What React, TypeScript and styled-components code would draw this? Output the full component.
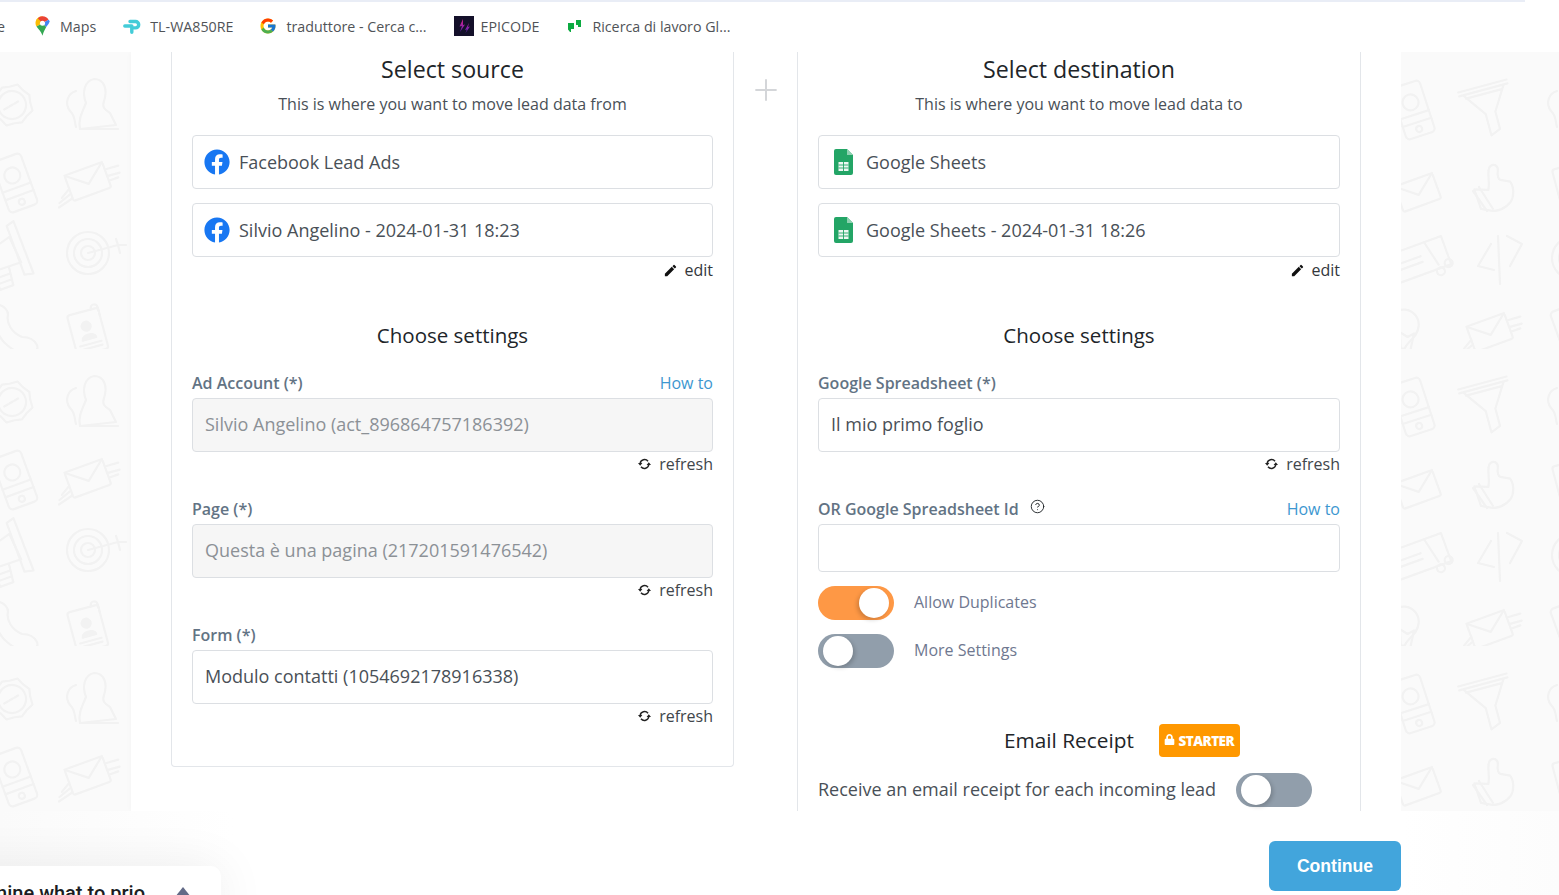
import React from "react";
import styled, { createGlobalStyle } from "styled-components";
import { FaFacebook, FaLock } from "react-icons/fa";
import { FcGoogle } from "react-icons/fc";
import { MdEdit } from "react-icons/md";
import { Plus, CircleHelp } from "lucide-react";

const Global = createGlobalStyle`
  html, body { margin: 0; padding: 0; background: #fff; }
  body { font-family: "Open Sans", "Liberation Sans", sans-serif; color: #495057; }
  * { box-sizing: border-box; }
`;

const Page = styled.div`
  position: relative;
  width: 1559px;
  height: 895px;
  overflow: hidden;
  display: flex;
  flex-direction: column;
`;

/* Bookmarks */
const BookmarksBar = styled.header`
  height: 52px;
  flex: none;
  background: #fff;
  display: flex;
  flex-direction: column;
`;
const TopRule = styled.div`
  height: 2px;
  margin-right: 34px;
  background: #e9edf6;
  flex: none;
`;
const BookmarkList = styled.nav`
  display: flex;
  align-items: center;
  gap: 27px;
  height: 48px;
  margin-left: -3px;
`;
const Bookmark = styled.span<{ $gap?: number }>`
  display: inline-flex;
  align-items: center;
  gap: ${(p) => p.$gap ?? 10}px;
  font-size: 14.25px;
  color: #505357;
  white-space: nowrap;
`;
const CutBookmark = styled(Bookmark)`
  margin-right: 3px;
`;
const GoogleMark = styled(FcGoogle)`
  margin-left: -1px;
`;

/* Main */
const Middle = styled.main`
  flex: none;
  height: 759px;
  display: flex;
  overflow: hidden;
`;
const Side = styled.aside<{ $w: number }>`
  flex: none;
  width: ${(p) => p.$w}px;
  background: #fafafa;
  overflow: hidden;
  line-height: 0;
`;
const Center = styled.div`
  flex: none;
  width: 1270px;
  background: #fff;
  padding: 0 40px;
  display: flex;
  align-items: flex-start;
  box-shadow: 0 0 6px rgba(0, 0, 0, 0.03);
`;
const Card = styled.section<{ $w: number }>`
  flex: none;
  width: ${(p) => p.$w}px;
  border: 1px solid #e3e6ea;
  border-top: none;
  border-radius: 0 0 4px 4px;
  padding: 0 20px 38px;
`;
const PlusCol = styled.div`
  flex: none;
  width: 63px;
  display: flex;
  justify-content: center;
  padding-top: 21px;
  color: #d4d6d9;
`;
const Title = styled.h2`
  margin: 0;
  height: 36px;
  line-height: 34px;
  font-size: 23.2px;
  font-weight: 500;
  color: #212529;
  text-align: center;
`;
const Subtitle = styled.p`
  margin: 4px 0 19px;
  height: 24px;
  line-height: 24px;
  font-size: 16px;
  color: #495057;
  text-align: center;
`;
const Selected = styled.div<{ $pad: number; $gap: number }>`
  height: 54px;
  border: 1px solid #dcdfe3;
  border-radius: 4px;
  display: flex;
  align-items: center;
  gap: ${(p) => p.$gap}px;
  padding-left: ${(p) => p.$pad}px;
  font-size: 18px;
  color: #495057;
  & + & { margin-top: 14px; }
`;
const ActionRow = styled.div`
  height: 24px;
  display: flex;
  justify-content: flex-end;
  align-items: center;
  gap: 8px;
  font-size: 16px;
  color: #41464b;
`;
const EditRow = styled(ActionRow)`
  margin-top: 1px;
  gap: 6px;
  color: #33373b;
`;
const SectionTitle = styled.h3`
  margin: 40px 0 22px;
  height: 28px;
  line-height: 26px;
  font-size: 20.5px;
  font-weight: 500;
  color: #212529;
  text-align: center;
`;
const Field = styled.div`
  margin-bottom: 22px;
  &:last-child { margin-bottom: 0; }
`;
const LabelRow = styled.div`
  height: 22px;
  margin-bottom: 4px;
  display: flex;
  align-items: center;
  justify-content: space-between;
`;
const Label = styled.label`
  font-size: 16px;
  font-weight: 600;
  color: #627384;
  display: inline-flex;
  align-items: center;
  gap: 11px;
  svg { color: #212529; margin-top: -6px; }
`;
const HowTo = styled.a`
  font-size: 16px;
  color: #3d97d0;
`;
const Input = styled.div<{ $disabled?: boolean; $h?: number }>`
  height: ${(p) => p.$h ?? 54}px;
  border: 1px solid #dcdfe3;
  border-radius: 4px;
  background: ${(p) => (p.$disabled ? "#f6f6f6" : "#fff")};
  color: ${(p) => (p.$disabled ? "#8c9196" : "#495057")};
  font-size: 18px;
  display: flex;
  align-items: center;
  padding: 0 0 2px 12px;
`;
const ToggleRow = styled.div`
  display: flex;
  align-items: center;
  gap: 20px;
  height: 34px;
  margin-top: 14px;
  font-size: 16px;
  color: #6f7890;
`;
const RowText = styled.span`
  margin-bottom: 2px;
`;
const Toggle = styled.span<{ $on?: boolean }>`
  flex: none;
  width: 76px;
  height: 34px;
  border-radius: 17px;
  padding: 2px 5px;
  display: flex;
  justify-content: ${(p) => (p.$on ? "flex-end" : "flex-start")};
  background: ${(p) => (p.$on ? "#fe9845" : "#919eab")};
  &::after {
    content: "";
    width: 30px;
    height: 30px;
    border-radius: 50%;
    background: #fff;
    box-shadow: ${(p) => (p.$on ? "-2px 2px 4px" : "2px 2px 4px")} rgba(0, 0, 0, 0.18);
  }
`;
const EmailHeader = styled.div`
  margin-top: 56px;
  height: 33px;
  padding-left: 186px;
  display: flex;
  align-items: center;
  gap: 25px;
  font-size: 20.8px;
  font-weight: 500;
  color: #212529;
`;
const EmailTitle = styled.span`
  margin-bottom: 2px;
`;
const Badge = styled.span`
  width: 81px;
  height: 33px;
  border-radius: 4px;
  background: #ff9800;
  color: #fff;
  display: inline-flex;
  align-items: center;
  justify-content: center;
  gap: 3px;
  font-size: 13.5px;
  font-weight: 800;
  letter-spacing: -0.5px;
  svg { margin-top: -3px; }
`;
const ReceiptRow = styled.div`
  margin-top: 16px;
  height: 34px;
  display: flex;
  align-items: center;
  gap: 20px;
  font-size: 18px;
  color: #495057;
`;

/* Footer */
const Footer = styled.footer`
  flex: none;
  height: 84px;
  background: linear-gradient(90deg, #fafafa, #ffffff 15%, #ffffff 90%, #fcfcfc);
  display: flex;
  justify-content: flex-end;
  align-items: flex-start;
  padding: 30px 158px 0 0;
`;
const ContinueButton = styled.button`
  width: 132px;
  height: 50px;
  border: none;
  border-radius: 6px;
  background: #42a5dc;
  color: #fff;
  font-family: "Liberation Sans", Arial, sans-serif;
  font-size: 17.6px;
  font-weight: 700;
`;
const Widget = styled.div`
  position: absolute;
  left: -80px;
  top: 866px;
  width: 301px;
  height: 60px;
  background: #fff;
  border-radius: 10px;
  box-shadow: 0 0 50px rgba(0, 0, 0, 0.07);
  display: flex;
  align-items: flex-start;
  padding: 15px 0 0 0;
`;
const WidgetText = styled.span`
  font-family: Roboto, "Liberation Sans", sans-serif;
  font-size: 20px;
  font-weight: 500;
  line-height: 24px;
  color: #1b1d23;
  white-space: nowrap;
  width: 225px;
  text-align: right;
`;
const WidgetCaret = styled.span`
  margin: 6px 0 0 30px;
  width: 0;
  height: 0;
  border-left: 8px solid transparent;
  border-right: 8px solid transparent;
  border-bottom: 10px solid #636b87;
`;

/* Bookmark icons */
const MapsIcon = () => (
  <svg width="15" height="20" viewBox="0 0 16 21">
    <path d="M8 0C3.600 0 .5 3.300.5 7.500c0 1.400.5 2.600 1.100 3.600L8 7.500V0z" fill="#fbbc04" />
    <path d="M3 2.200 8 7.500l6.400-3.800C13.300 1.500 10.900 0 8 0 6 0 4.300.8 3 2.200z" fill="#ea4335" />
    <path d="M14.400 3.700 8 7.500l4 4c1.800-2.200 3.500-4.300 3.500-6 0-.7-.5-1.300-1.100-1.800z" fill="#4285f4" />
    <path d="M1.600 11.100C3 13.500 6.700 16 8 21c1-4.500 2.800-6.900 4-9.500L8 7.500z" fill="#34a853" />
    <circle cx="8" cy="7.500" r="2.700" fill="#fff" />
  </svg>
);
const TpIcon = () => (
  <svg width="18" height="16" viewBox="0 0 18 16" fill="none">
    <path d="M7 3.500h5.500a3.200 3.200 0 0 1 0 6.400h-2" stroke="#43ccd8" strokeWidth="3.400" strokeLinecap="round" />
    <path d="M8.800 8v6.300M1.800 8h7" stroke="#43ccd8" strokeWidth="3.400" strokeLinecap="round" />
  </svg>
);
const EpicodeIcon = () => (
  <svg width="20" height="20" viewBox="0 0 20 20">
    <defs>
      <linearGradient id="epi" x1="0" y1="0" x2="0" y2="1">
        <stop offset="0" stopColor="#d91f86" />
        <stop offset="1" stopColor="#5b25c0" />
      </linearGradient>
    </defs>
    <rect width="20" height="20" fill="#14102a" />
    <path d="M9 3 5.500 10.500 8 10 6 16 11 8.500 9 9zM15 7 11 14l2-.5-1.500 3.500 4.500-6.500-2 .5z" fill="url(#epi)" />
  </svg>
);
const JobIcon = () => (
  <svg width="16" height="12" viewBox="0 0 16 12">
    <path d="M2 3h6v6H5v3H4L2 9.500z" fill="#0caa41" />
    <path d="M10 0h5v7h-3V5h-2z" fill="#0caa41" />
  </svg>
);
const SheetsIcon = () => (
  <svg width="19" height="26" viewBox="0 0 19 26">
    <path d="M2 0h11l6 6v18a2 2 0 0 1-2 2H2a2 2 0 0 1-2-2V2a2 2 0 0 1 2-2z" fill="#23a566" />
    <path d="M13 0l6 6h-6z" fill="#8ed1b1" />
    <path d="M4.500 13h10v9h-10z" fill="#eef7f2" />
    <path d="M4.500 16h10M4.500 19h10M9.500 13v9" stroke="#23a566" strokeWidth=".9" />
  </svg>
);
const FbIcon = () => <FaFacebook size={26} color="#1877f2" />;
const RefreshIcon = () => (
  <svg width="13" height="12" viewBox="0 0 13 12" fill="none">
    <path d="M2.200 5.500A4.400 4.400 0 0 1 10 3.200M10.800 6.500A4.400 4.400 0 0 1 3 8.800" stroke="#222" strokeWidth="1.500" />
    <path d="M0 5h4.400L2.200 7.800zM8.600 7h4.400L10.800 4.200z" fill="#222" />
  </svg>
);

/* Background doodles */
const Doodle = styled.g`
  fill: none;
  stroke: #f2f2f2;
  stroke-width: 2.2;
  stroke-linejoin: round;
  stroke-linecap: round;
`;
const At: React.FC<{ x: number; y: number; r?: number; children: React.ReactNode }> = ({ x, y, r = -20, children }) => (
  <g transform={`translate(${x} ${y}) rotate(${r})`}>{children}</g>
);
const Sale = () => (
  <>
    <path d="M0-20 7-17 15-15 17-7 20 0 17 7 15 15 7 17 0 20-7 17-15 15-17 7-20 0-17-7-15-15-7-17Z" />
    <circle r="14" />
    <path d="M-9 0h18" strokeDasharray="4 2" />
  </>
);
const People = () => (
  <>
    <path d="M-10 24C-12 14-8 8-4-2c-4-10-2-22 8-24 10 0 14 10 10 22-2 6 0 8 6 12l6 12z" />
    <path d="M-14 22c-2-6 0-10-6-16-6-8-2-18 6-20" />
    <path d="M-10 24h38" />
  </>
);
const Mobile = () => (
  <>
    <rect x="-15" y="-27" width="30" height="54" rx="4" />
    <circle cy="-8" r="8" />
    <path d="M-15 5h30M-15 13h30" />
    <circle cy="20" r="3" />
  </>
);
const Mail = () => (
  <>
    <rect x="-20" y="-14" width="40" height="27" rx="2" />
    <path d="M-20-14 0 2 20-14" />
  </>
);
const WingMail = () => (
  <>
    <Mail />
    <path d="M20-6 34-5M20 1 33 2M20 6l10 0M-20 0l-10 6M-20 5l-14 5M-20 10l-16 4" />
  </>
);
const Megaphone = () => (
  <>
    <path d="M-26-8-26 10 8 14V-14Z" transform="rotate(-5)" />
    <path d="M8-26 16-28 17 28 8 26Z" />
    <path d="M-20 12l0 20 14 0 2-18M-20 20h15M-18 26h12" />
  </>
);
const Target = () => (
  <>
    <circle r="21" />
    <circle r="14" />
    <circle r="7" />
    <path d="M0 0 30-8M28-14l2 6 8 0M30-8l2 8" />
  </>
);
const Call = () => (
  <path d="M-15-28c5 2 8 6 8 10-2 8 4 18 14 22 6 0 12 2 15 8 2 6-4 10-10 9-14-1-27-13-30-24" />
);
const IdCard = () => (
  <>
    <rect x="-16" y="-22" width="32" height="42" rx="3" />
    <circle cy="-7" r="4.500" fill="#f2f2f2" />
    <path d="M-7 6c0-6 14-6 14 0z" fill="#f2f2f2" />
    <path d="M-11 11h22M-11 15h22M9-22c0-6 7-5 7 0v8" />
  </>
);
const Funnel = () => (
  <path d="M-26-22H24M-26-18H24M-22-18-5 6-5 28 5 24 5 6 20-18M-20-14H16" />
);
const Thumb = () => (
  <>
    <path d="M-20 6-6 4C-6-6-12-16-8-20c4-4 8 0 8 4 0 4 2 8 4 8l10 0c6 6 6 16 4 20-4 8-12 12-18 12l-10 0z" transform="rotate(10)" />
    <path d="M-22 4-8 24M-16 0-2 22" />
  </>
);
const Code = () => (
  <path d="M-7-14-20 8-4 12M0-22 2 26M9-22 24-14 12 8" />
);
const Cheque = () => (
  <>
    <rect x="-32" y="-16" width="58" height="30" />
    <path d="M-26-4h26M-26 2h26M8-16 14 10" />
    <circle cx="14" cy="17" r="4" />
    <circle cx="24" cy="12" r="4" />
  </>
);
const Bulb = () => (
  <>
    <path d="M-8 16c0-8-12-12-12-24a15 15 0 0 1 30 0c0 12-10 16-12 24z" />
    <path d="M-8 20H8M-6 25H6M-6 16l-2-16 8 4 6-4-2 16" />
  </>
);

const LeftPattern = () => (
  <svg width="131" height="759">
    <defs>
      <pattern id="left-tile" width="297" height="297" patternUnits="userSpaceOnUse">
        <Doodle>
          <At x={12} y={53} r={-30}><Sale /></At>
          <At x={90} y={53} r={0}><People /></At>
          <At x={15} y={131}><Mobile /></At>
          <At x={88} y={130}><WingMail /></At>
          <At x={8} y={201}><Megaphone /></At>
          <At x={88} y={201} r={0}><Target /></At>
          <At x={15} y={281} r={0}><Call /></At>
          <At x={88} y={281} r={-15}><IdCard /></At>
        </Doodle>
      </pattern>
    </defs>
    <rect width="131" height="759" fill="url(#left-tile)" />
  </svg>
);
const RightPattern = () => (
  <svg width="158" height="759">
    <defs>
      <pattern id="right-tile" width="297" height="297" patternUnits="userSpaceOnUse">
        <Doodle>
          <At x={12} y={58} r={-18}><Mobile /></At>
          <At x={88} y={55} r={-15}><Funnel /></At>
          <At x={17} y={141}><Mail /></At>
          <At x={94} y={135} r={0}><Thumb /></At>
          <At x={21} y={208}><Cheque /></At>
          <At x={97} y={206} r={0}><Code /></At>
          <At x={7} y={281} r={5}><Bulb /></At>
          <At x={89} y={281}><WingMail /></At>
          <At x={170} y={53} r={0}><People /></At>
          <At x={172} y={135} r={-15}><IdCard /></At>
          <At x={172} y={206} r={0}><Target /></At>
          <At x={172} y={281}><Mobile /></At>
        </Doodle>
      </pattern>
    </defs>
    <rect width="158" height="759" fill="url(#right-tile)" />
  </svg>
);

const Refresh = () => (
  <ActionRow>
    <RefreshIcon />
    <span>refresh</span>
  </ActionRow>
);
const Edit = () => (
  <EditRow>
    <MdEdit size={15} color="#111" />
    <span>edit</span>
  </EditRow>
);

export default function App() {
  return (
    <Page>
      <Global />
      <BookmarksBar>
        <TopRule />
        <BookmarkList>
          <CutBookmark>e</CutBookmark>
          <Bookmark $gap={10}><MapsIcon />Maps</Bookmark>
          <Bookmark $gap={9}><TpIcon />TL-WA850RE</Bookmark>
          <Bookmark $gap={9}><GoogleMark size={18} />traduttore - Cerca c...</Bookmark>
          <Bookmark $gap={7}><EpicodeIcon />EPICODE</Bookmark>
          <Bookmark $gap={10}><JobIcon />Ricerca di lavoro Gl...</Bookmark>
        </BookmarkList>
      </BookmarksBar>
      <Middle>
        <Side $w={131}><LeftPattern /></Side>
        <Center>
          <Card $w={563}>
            <Title>Select source</Title>
            <Subtitle>This is where you want to move lead data from</Subtitle>
            <Selected $pad={11} $gap={9}><FbIcon />Facebook Lead Ads</Selected>
            <Selected $pad={11} $gap={9}><FbIcon />Silvio Angelino - 2024-01-31 18:23</Selected>
            <Edit />
            <SectionTitle>Choose settings</SectionTitle>
            <Field>
              <LabelRow><Label>Ad Account (*)</Label><HowTo>How to</HowTo></LabelRow>
              <Input $disabled>Silvio Angelino (act_896864757186392)</Input>
              <Refresh />
            </Field>
            <Field>
              <LabelRow><Label>Page (*)</Label></LabelRow>
              <Input $disabled>Questa è una pagina (217201591476542)</Input>
              <Refresh />
            </Field>
            <Field>
              <LabelRow><Label>Form (*)</Label></LabelRow>
              <Input>Modulo contatti (1054692178916338)</Input>
              <Refresh />
            </Field>
          </Card>
          <PlusCol><Plus size={34} strokeWidth={1.4} /></PlusCol>
          <Card $w={564}>
            <Title>Select destination</Title>
            <Subtitle>This is where you want to move lead data to</Subtitle>
            <Selected $pad={15} $gap={13}><SheetsIcon />Google Sheets</Selected>
            <Selected $pad={15} $gap={13}><SheetsIcon />Google Sheets - 2024-01-31 18:26</Selected>
            <Edit />
            <SectionTitle>Choose settings</SectionTitle>
            <Field>
              <LabelRow><Label>Google Spreadsheet (*)</Label></LabelRow>
              <Input>Il mio primo foglio</Input>
              <Refresh />
            </Field>
            <Field>
              <LabelRow>
                <Label>OR Google Spreadsheet Id <CircleHelp size={15} strokeWidth={1.5} /></Label>
                <HowTo>How to</HowTo>
              </LabelRow>
              <Input $h={48} />
              <ToggleRow><Toggle $on /><RowText>Allow Duplicates</RowText></ToggleRow>
              <ToggleRow><Toggle /><RowText>More Settings</RowText></ToggleRow>
            </Field>
            <EmailHeader>
              <EmailTitle>Email Receipt</EmailTitle>
              <Badge><FaLock size={11} />STARTER</Badge>
            </EmailHeader>
            <ReceiptRow><RowText>Receive an email receipt for each incoming lead</RowText><Toggle /></ReceiptRow>
          </Card>
        </Center>
        <Side $w={158}><RightPattern /></Side>
      </Middle>
      <Footer>
        <ContinueButton>Continue</ContinueButton>
      </Footer>
      <Widget>
        <WidgetText>Determine what to prio</WidgetText>
        <WidgetCaret />
      </Widget>
    </Page>
  );
}
